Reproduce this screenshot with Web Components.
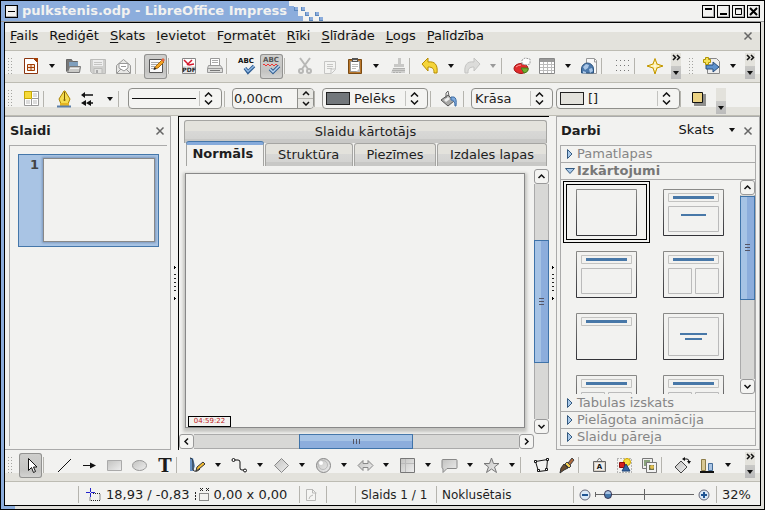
<!DOCTYPE html>
<html lang="lv">
<head>
<meta charset="utf-8">
<meta name="viewport" content="width=device-width, initial-scale=1">
<title>pulkstenis.odp - LibreOffice Impress</title>
<style>
    html, body {
        margin: 0;
        height: 100%;
    }
    body {
        font: 13px/16px "DejaVu Sans", sans-serif;
        color: #1e1e1e;
        background: #f2f2f0;
    }
</style>
</head>
<body>
<impress-app></impress-app>

<script>
// icons are drawn on a 20x20 grid
const ICONS = {
    new: `<path d="M3.5 2.5h9l4 4v11h-13z" fill="#fff" stroke="#8c3510"/><path d="M12 2h5v5z" fill="#a33e03"/><path d="M6.5 8.5h7v6h-7z" fill="#f6e2d4" stroke="#a33e03"/><path d="M7 11.5h6M10 9v5" stroke="#a33e03"/>`,
    open: `<path d="M3.5 15.5v-12h5l1 2h5v3" fill="#777" stroke="#666"/><path d="M6 6h9v5H6z" fill="#7f9fbd"/><path d="M6.5 10.5h11l-1 6h-12z" fill="#c9c9c6" stroke="#777"/><path d="M7 12.5h9" stroke="#eee"/>`,
    save: `<path d="M2.5 3.5h15v14h-13l-2-2z" fill="#d0d0ce" stroke="#bcbcba"/><path d="M5 4h10v6H5z" fill="#eee"/><path d="M6 6.5h8M6 8.5h8" stroke="#c4c4c2"/><path d="M6 12.5h8v5H6z" fill="#e2e2e0" stroke="#bcbcba"/><path d="M8 14h2v3H8z" fill="#aaa"/>`,
    mail: `<path d="M3.5 9.5l7-6 7 6v8h-14z" fill="#e8e8e6" stroke="#9a9a98"/><path d="M6 12V7.5h9V12l-4 3z" fill="#fff" stroke="#999"/><path d="M4 17l4-4M17 17l-4-4M8 10.5h5" stroke="#999" fill="none"/>`,
    edit: `<path d="M3.5 3.5h13v13h-13z" fill="#fafafa" stroke="#555"/><path d="M5 6.5h8M5 8.5h7M5 10.5h4M5 12.5h4" stroke="#aaa"/><path d="M8 13l2-3 6-6 2 2-6 6z" fill="#f5a623" stroke="#a86a10"/><path d="M15 4l2-2 2 2-2 2z" fill="#e2643f"/><path d="M7.5 14l1-3 2 2z" fill="#222"/>`,
    pdf: `<path d="M3.5 2.5h13v15h-13z" fill="#fff" stroke="#888"/><path d="M5 4l5 5 5-1M8 9l5-5" fill="none" stroke="#d3182b" stroke-width="1.5"/><path d="M4 10h12v7H4z" fill="#e6e6e6"/><text x="10" y="16" text-anchor="middle" font-size="6" font-weight="bold" fill="#222">PDF</text>`,
    print: `<path d="M6.5 9V2.5h9V9" fill="#fff" stroke="#999"/><path d="M8 4.5h6M8 6.5h6" stroke="#aaa"/><path d="M4.5 9.5h12l2 3v4h-15v-4z" fill="#dcdcda" stroke="#999"/><path d="M3.5 12.5h15" stroke="#999"/><path d="M6 14.5h10" stroke="#777"/>`,
    abc: `<text x="1" y="7" font-size="7" font-weight="bold" fill="#111">ABC</text><path d="M8 12l3 4 6-6" fill="none" stroke="#315f94" stroke-width="3.5"/><path d="M8 12l3 3.5 6-5.5" fill="none" stroke="#8fb8e4" stroke-width="1.5"/>`,
    autoabc: `<text x="1" y="6" font-size="7" font-weight="bold" fill="#555">ABC</text><path d="M1 9l1-1 2 2 2-2 2 2 2-2 2 2 2-2 2 2" fill="none" stroke="#e33"/><path d="M8 13l3 3 6-6" fill="none" stroke="#315f94" stroke-width="3.5"/><path d="M8 13l3 3 6-6" fill="none" stroke="#b8d3ef" stroke-width="1.5"/>`,
    cut: `<g fill="none" stroke="#b8b8b6" stroke-width="2"><path d="M5 2l8 11M15 2L7 13"/><circle cx="6" cy="15" r="2"/><circle cx="14" cy="15" r="2"/></g>`,
    copy: `<path d="M4.5 5.5h11v8l-4 4h-7z" fill="#f4f4f2" stroke="#c6c6c4"/><path d="M7 8.5h6M7 10.5h6M7 12.5h5" stroke="#c6c6c4"/><path d="M11 17v-4h4" fill="none" stroke="#c6c6c4"/>`,
    paste: `<path d="M3.5 3.5h13v14h-13z" fill="#b9772c" stroke="#7a4a12"/><path d="M5.5 5.5h9v10h-9z" fill="#fff" stroke="#999"/><path d="M7 8.5h6M7 10.5h6M7 12.5h4" stroke="#bbb"/><path d="M7 2h6v4H7z" fill="#555"/><path d="M8 4.5h4" stroke="#ddd"/><path d="M11 16l4-4v4z" fill="#bbb"/>`,
    brush: `<path d="M11 2h3v6h3v3H7V8h4z" fill="#c8c8c6"/><path d="M6 12h12v5H4z" fill="#cfcfcd"/><path d="M6 12.5h12M5 14.5h13M6 16.5h2m1 0h2m1 0h2" stroke="#b0b0ae"/>`,
    undo: `<path d="M2 8l6-6v4c7-1 10 3 9 11h-3c0-4-1-6-6-6v4z" fill="#f5d53a" stroke="#b68b00"/>`,
    redo: `<path d="M18 8l-6-6v4C5 5 2 9 3 17h3c0-4 1-6 6-6v4z" fill="#dcdcda" stroke="#c4c4c2"/>`,
    chart: `<ellipse cx="9" cy="12.5" rx="7" ry="5" fill="#e02b2b" stroke="#a01818"/><path d="M9 12h7q1 4-4 5z" fill="#6eae32" stroke="#477c18"/><path d="M4 11q2-2 5-2" fill="none" stroke="#f99"/><path d="M10 8V4l3-2 5 1v5l-4 1z" fill="#fff" stroke="#999" stroke-dasharray="2 1"/>`,
    table: `<path d="M2.5 2.5h15v15h-15z" fill="#fff" stroke="#888"/><path d="M3 3h14v3H3z" fill="#999"/><path d="M3 8.5h14M3 11.5h14M3 14.5h14M6.5 6v11M10.5 6v11M14.5 6v11" stroke="#bbb"/>`,
    globe: `<path d="M7.5 2.5h8l2 2v13h-10z" fill="#f8f8f8" stroke="#999"/><path d="M15.5 3v3h2" fill="none" stroke="#999"/><path d="M2.5 17V13a6 6 0 0 1 12 0v4z" fill="#4c79ac" stroke="#2d557f"/><path d="M4 11l3-3 3 1-1 3-3 2zM10 13l3-1 1 3-3 2zM4 15l3 1v1H4z" fill="#a9c6e6"/>`,
    grid: `<path d="M4 4.5h13M4 9.5h13M4 14.5h13" stroke="#777" stroke-dasharray="1 3"/>`,
    star4: `<path d="M10 2.5l2 5.5 6 2-6 2-2 6-2-6-6-2 6-2z" fill="#fae37a" stroke="#c29700"/><path d="M10 6v8M6 10h8" stroke="#fff"/>`,
    newslide: `<path d="M5.5 2.5h9l3 3v12h-12z" fill="#eee" stroke="#888"/><path d="M4 9h7V6l6 5-6 5v-3H4z" fill="#5d91cc" stroke="#294f7c"/><path d="M3.5 1.5h3v2h2v3h-2v2h-3v-2h-2v-3h2z" fill="#f7e35c" stroke="#b19400"/>`,
    quad: `<path d="M3.5 2.5h14v14h-14z" fill="#fff" stroke="#999"/><path d="M3.5 2.5h7v7h-7z" fill="#f5d93a" stroke="#c9a900"/><path d="M12 4h4v4h-4zM5 11h4v4H5zM12 11h4v4h-4z" fill="#ddd"/><path d="M10.5 10v7M11 9.5h6" stroke="#999"/>`,
    pen: `<path d="M10 2h1l5 8-2 5H7l-2-5z" fill="#f5dc50" stroke="#aa8200"/><path d="M10.5 3v7" stroke="#7a5c00"/><circle cx="10.5" cy="11" r="1" fill="#7a5c00"/><path d="M6 14h9v3H6z" fill="#e5b422"/><path d="M3 17.5h14" stroke="#5b7ea8" stroke-width="2"/>`,
    lineends: `<path d="M5 6h9M10 14h4" stroke="#111" stroke-width="1.5"/><path d="M2 6l4-3v6zM2 14l5-3v6zM7 14l5-3v6z" fill="#111"/>`,
    bucket: `<g transform="translate(-3 0)"><path d="M3 11l7-5 6 6-6 5z" fill="#a9a9a7" stroke="#555"/><path d="M8 9V4l2-2 1 5" fill="none" stroke="#666"/><path d="M13 8h3q3 1 2 9h-1q0-6-4-6z" fill="#7faadc" stroke="#3f6ea6"/><path d="M6 11l4-3 2 2-4 3z" fill="#eee"/></g>`,
    shadow: `<g transform="translate(-3 0)"><path d="M6 5h12v12H6z" fill="#8e8e8c"/><path d="M4.5 3.5h10v10h-10z" fill="#ecd384" stroke="#111"/></g>`,
    pointer: `<path d="M7.5 3.5v12l3-3 2 5 2-1-2-4.5h3.5z" fill="#fff" stroke="#111"/>`,
    line: `<path d="M4 17L17 4" stroke="#111"/>`,
    arrowline: `<path d="M4 10.5h9" stroke="#111"/><path d="M11 7.5l6 3-6 3z" fill="#111"/>`,
    rect: `<path d="M3.5 5.5h14v10h-14z" fill="url(#g)" stroke="#aaa"/>`,
    ellipse: `<ellipse cx="10.5" cy="10.5" rx="7" ry="5" fill="url(#g)" stroke="#999"/>`,
    texttool: `<text x="11" y="17" text-anchor="middle" font-family="DejaVu Serif, serif" font-weight="bold" font-size="18" fill="#1b1b1b">T</text>`,
    curve: `<path d="M3 3h3l2 8-2 5H3z" fill="#668fc0"/><path d="M3 3q3 0 3 5t0 7q3 3 7-1" fill="none" stroke="#222"/><path d="M9 16l1-4 6-5 2 2-6 5z" fill="#f2bc35" stroke="#333"/>`,
    connector: `<path d="M5 5h4q2 0 2 2v6q0 2 2 2h2" fill="none" stroke="#111"/><circle cx="4.5" cy="5" r="1.5" fill="#fff" stroke="#111"/><circle cx="16" cy="15.5" r="1.5" fill="#fff" stroke="#111"/>`,
    diamond: `<path d="M10.5 3.5l7 7-7 7-7-7z" fill="url(#g)" stroke="#888"/>`,
    sphere: `<circle cx="10.5" cy="10.5" r="7" fill="url(#g)" stroke="#888"/><circle cx="10" cy="10" r="4.5" fill="none" stroke="#bbb"/><circle cx="8" cy="8" r="2" fill="#fff"/>`,
    leftright: `<path d="M3 10.5l5-5v3h5v-3l5 5-5 5v-3H8v3z" fill="url(#g)" stroke="#888"/>`,
    flow: `<path d="M3.5 3.5h14v14h-14z" fill="url(#g)" stroke="#777"/><path d="M8.5 4v13M4 8.5h13" stroke="#bbb"/>`,
    callout: `<path d="M4 4.5h13q1 0 1 1v7q0 1-1 1h-9l-4 4v-4q-1 0-1-1v-7q0-1 1-1z" fill="url(#g)" stroke="#888"/>`,
    star5: `<path d="M10.5 3l2 5.5h5.5l-4.5 3.5 2 5.5-5-3.5-5 3.5 2-5.5L3 8.5h5.5z" fill="url(#g)" stroke="#777"/>`,
    points: `<path d="M4.5 6.5l12-2-1 11-8 1z" fill="none" stroke="#111"/><path d="M3.5 5.5h2v2h-2zM15.5 3.5h2v2h-2zM6.5 14.5h2v2h-2zM14.5 13.5h2v2h-2z" fill="#fff" stroke="#111"/>`,
    glue: `<path d="M12 8l4-5 2 2-4 5z" fill="#b06838" stroke="#444"/><path d="M9 9l2-2 4 4-2 2z" fill="#f3cf54" stroke="#444"/><path d="M8 9l4 4-4 2-4 3 1-5z" fill="#6c4d30" stroke="#333"/>`,
    fontwork: `<path d="M8 6l2.5-3L13 6" fill="none" stroke="#777"/><path d="M4.5 6.5h12v10h-12z" fill="#d6cfc4" stroke="#666"/><path d="M6 8h9v7H6z" fill="#eee"/><text x="10.5" y="14" text-anchor="middle" font-size="7" font-weight="bold" fill="#111">A</text>`,
    image: `<path d="M3.5 3.5h14v14h-14z" fill="none" stroke="#777" stroke-dasharray="1 2"/><circle cx="13" cy="7" r="3.5" fill="#f7df43" stroke="#d0a800"/><path d="M5.5 7.5h5v5h-5z" fill="#d32020" stroke="#8d0a0a"/><path d="M12 9l4 7H8z" fill="#3465a4" stroke="#1d4273"/>`,
    gallery: `<path d="M3.5 3.5h10v10h-10z" fill="#eee" stroke="#777"/><path d="M5 5h6v6H5z" fill="#8aa37c"/><path d="M7.5 7.5h10v10h-10z" fill="#f3f3f3" stroke="#777"/><path d="M10 10h5v5h-5z" fill="#6f7450"/><circle cx="13" cy="12" r="2" fill="#e3bf50"/>`,
    rotate: `<path d="M3 12l6-6 6 6-6 6z" fill="url(#g)" stroke="#444"/><path d="M12 4h3q2 0 2 3" fill="none" stroke="#111"/><path d="M15 6h4l-2 3zM13 2v4l-3-2z" fill="#111"/>`,
    align: `<path d="M4.5 4.5h4v11h-4z" fill="#d8c894" stroke="#8d7d48"/><path d="M11.5 8.5h4v7h-4z" fill="#a9c4e4" stroke="#456d98"/><path d="M3 17h14" stroke="#111" stroke-width="2"/>`,
    position: `<path d="M2 7.5h9M6.5 3v9" stroke="#22c" stroke-dasharray="4 1"/><path d="M9 8.5h7v7H6v-3" fill="none" stroke="#222" stroke-dasharray="1 1"/>`,
    size: `<path d="M3.5 7v9" stroke="#222" stroke-dasharray="2 1"/><path d="M7.5 8.5h9v7h-9z" fill="none" stroke="#222" stroke-dasharray="1 1"/><path d="M8 3l3 3M8 6l3-3M14 3l3 3M14 6l3-3" stroke="#222"/>`,
    doc: `<path d="M5.5 4.5h6l3 3v8h-9z" fill="#f5f5f3" stroke="#b9b9b7"/><path d="M11.5 4v4h4M8 14q0-3 4-4" stroke="#b9b9b7" fill="none"/>`,
    minus: `<circle cx="10" cy="10" r="5" fill="#dce9f7" stroke="#667"/><path d="M7 10h6" stroke="#205493" stroke-width="2"/>`,
    plus: `<circle cx="10" cy="10" r="5" fill="#dce9f7" stroke="#667"/><path d="M7 10h6M10 7v6" stroke="#205493" stroke-width="2"/>`,
    close: `<path d="M6.5 6.5l7 7M13.5 6.5l-7 7" stroke="#666" stroke-width="1.5"/>`
};

function icon(name) {
    return `<svg width="20" height="20" viewBox="0 0 20 20" aria-hidden="true">
        <defs><linearGradient id="g" x1="0" y1="0" x2="1" y2="1"><stop offset="0" stop-color="#c2c2c0"/><stop offset="1" stop-color="#eee"/></linearGradient></defs>
        ${ICONS[name]}</svg>`;
}

const DOWN = `<svg width="6" height="4" viewBox="0 0 6 4" aria-hidden="true"><path d="M0 0h6L3 4z" fill="currentColor"/></svg>`;

const RESET = `
    button {
        font: inherit;
        color: inherit;
        padding: 0;
        margin: 0;
        border: 0;
        background: none;
        display: flex;
        align-items: center;
        justify-content: center;
    }
    svg { display: block; flex: none; }
`;

class BaseElement extends HTMLElement {
    constructor() {
        super();
        this.shadowDOM = this.attachShadow({mode: "open"});
    }

    connectedCallback() {
        this.shadowDOM.innerHTML = `<style>* { box-sizing: border-box; } ${RESET} ${this.styles}</style>${this.markup}`;
    }

    attr(name) {
        return this.getAttribute(name) || "";
    }
}

class ToolButton extends BaseElement {
    get styles() {
        return `
            :host { display: flex; flex: none; }
            .main { width: 25px; height: 25px; border-radius: 3px; }
            :host([active]) .main {
                background: linear-gradient(#cfcfcd, #c4c4c2 70%, #d6d6d4);
                box-shadow: inset 0 0 0 1px #929290;
                width: 23px;
                margin: 0 1px;
            }
            .menu { width: 17px; color: #111; }
            .menu.off { color: #999; }
        `;
    }
    get markup() {
        const label = this.attr("label");
        const menu = this.hasAttribute("menu")
            ? `<button class="menu ${this.attr("menu")}" aria-label="${label}: izvēlne">${DOWN}</button>` : "";
        return `<button class="main" aria-label="${label}">${icon(this.attr("icon"))}</button>${menu}`;
    }
}
customElements.define("tool-button", ToolButton);

class ToolSeparator extends BaseElement {
    get styles() {
        return `:host { display: block; flex: none; width: 8px; height: 16px; border-left: 1px solid #b5b4ae; box-sizing: border-box; }`;
    }
    get markup() { return ""; }
}
customElements.define("tool-separator", ToolSeparator);

class ToolHandle extends BaseElement {
    get styles() {
        return `
            :host { display: block; flex: none; width: 5px; height: 17px; margin: 0 5px 0 3px; }
            svg path { stroke: #a4a4a0; stroke-dasharray: 1 2; }
        `;
    }
    get markup() {
        return `<svg width="5" height="17" viewBox="0 0 5 17"><path d="M.5 0v17M3.5 0v17"/></svg>`;
    }
}
customElements.define("tool-handle", ToolHandle);

class ToolMore extends BaseElement {
    get styles() {
        return `
            :host { display: flex; flex: none; }
            button {
                width: 10px;
                height: 26px;
                flex-direction: column;
                justify-content: space-between;
                padding: 1px 0 4px;
                background: linear-gradient(#e3e2dc 50%, #c9c9c7 50%, #bbb);
                color: #111;
            }
            :host([plain]) { align-self: flex-end; }
            :host([plain]) .chev { visibility: hidden; }
        `;
    }
    get markup() {
        return `<button aria-label="Vairāk"><svg class="chev" width="9" height="7" viewBox="0 0 9 7"><path d="M1 1l2.5 2.5L1 6M5 1l2.5 2.5L5 6" fill="none" stroke="#111" stroke-width="1.5"/></svg>${DOWN}</button>`;
    }
}
customElements.define("tool-more", ToolMore);

class ToolBar extends BaseElement {
    get styles() {
        return `
            :host {
                display: flex;
                align-items: center;
                flex: none;
                height: 32px;
                box-sizing: border-box;
                padding-bottom: 1px;
                border-bottom: 1px solid #bdbcb3;
                background: linear-gradient(#f2f2f0 74%, #e3e2dc 74%);
            }
            :host([tall]) { height: 33px; }
        `;
    }
    get markup() {
        return `<slot></slot>`;
    }
}
customElements.define("tool-bar", ToolBar);

class ComboField extends BaseElement {
    get styles() {
        return `
            :host {
                display: flex;
                align-items: center;
                flex: none;
                height: 21px;
                box-sizing: border-box;
                border: 1px solid #8f8f8b;
                border-radius: 4px;
                background: #f4f4f2;
                padding: 0 8px 0 3px;
            }
            .swatch { width: 24px; height: 13px; border: 1px solid #222; flex: none; margin-right: 4px; }
            .stroke { flex: none; width: 64px; height: 1px; background: #111; }
            select {
                appearance: none;
                font: inherit;
                color: #1e1e1e;
                border: 0;
                background: none;
                padding: 0;
                margin: 0;
                flex: 1;
                min-width: 0;
                height: 18px;
            }
            .steps { border-left: 1px solid #c3c3c0; padding: 1px 0 1px 4px; }
        `;
    }
    get markup() {
        const color = this.attr("swatch");
        return `
            ${color ? `<span class="swatch" style="background:${color}"></span>` : ""}
            ${this.hasAttribute("stroke") ? `<span class="stroke"></span>` : ""}
            <select aria-label="${this.attr("label")}"><option>${this.attr("value")}</option></select>
            <span class="steps"><svg width="9" height="13" viewBox="0 0 9 13"><path d="M1 4.5L4.5 1 8 4.5M1 8.5L4.5 12 8 8.5" fill="none" stroke="#111" stroke-width="1.5"/></svg></span>
        `;
    }
}
customElements.define("combo-field", ComboField);

class SpinField extends BaseElement {
    get styles() {
        return `
            :host {
                display: flex;
                flex: none;
                height: 21px;
                box-sizing: border-box;
                border: 1px solid #8f8f8b;
                border-radius: 4px;
                background: #f4f4f2;
                overflow: hidden;
            }
            input { font: inherit; color: #1e1e1e; border: 0; background: none; padding: 0 0 0 1px; flex: 1; min-width: 0; }
            .steps { display: flex; flex-direction: column; border-left: 1px solid #8f8f8b; width: 16px; background: #e8e8e4; }
            button { flex: 1; }
            button + button { border-top: 1px solid #b5b4ae; }
        `;
    }
    get markup() {
        return `
            <input type="text" aria-label="${this.attr("label")}" value="${this.attr("value")}">
            <span class="steps">
                <button aria-label="Palielināt"><svg width="8" height="5" viewBox="0 0 8 5"><path d="M1 4l3-3 3 3" fill="none" stroke="#111" stroke-width="1.5"/></svg></button>
                <button aria-label="Samazināt"><svg width="8" height="5" viewBox="0 0 8 5"><path d="M1 1l3 3 3-3" fill="none" stroke="#111" stroke-width="1.5"/></svg></button>
            </span>
        `;
    }
}
customElements.define("spin-field", SpinField);

class TitleBar extends BaseElement {
    get styles() {
        return `
            :host {
                display: flex;
                align-items: stretch;
                flex: none;
                height: 21px;
                box-sizing: border-box;
                background: #f2f2f0;
                border-bottom: 1px solid #999;
            }
            .caption { display: flex; align-items: center; background: #8caddc; color: #f2f2f0; gap: 4px; padding-left: 4px; }
            h1 { font: bold 13px/18px "DejaVu Sans", sans-serif; margin: 0; white-space: nowrap; }
            .space { flex: 1; }
            .controls { display: flex; align-items: center; gap: 2px; padding-right: 4px; }
            button { width: 13px; height: 13px; border: 1px solid #000; background: #f2f2f0; color: #000; box-shadow: inset -1px -1px #aaa; }
        `;
    }
    get markup() {
        const box = (label, path, weight = 2) => `<button aria-label="${label}"><svg width="11" height="11" viewBox="0 0 11 11"><path d="${path}" fill="none" stroke="#000" stroke-width="${weight}"/></svg></button>`;
        return `
            <div class="caption">${box("Logs", "M2 5.5h7", 1)}<h1><slot></slot></h1></div>
            <svg width="42" height="20" viewBox="0 0 42 20" shape-rendering="crispEdges">
                <path d="M0 0h2v5h5v5h4v5h5v5H0z" fill="#8caddc"/>
                <path d="M7 6h4v4H7zM14 6h4v4h-4zM18 11h4v4h-4zM28 11h4v4h-4zM22 16h4v4h-4zM32 16h4v4h-4z" fill="#5b87bd"/>
                <path d="M8 6h3v3H8zM15 6h3v3h-3zM19 11h3v3h-3zM29 11h3v3h-3zM23 16h3v3h-3zM33 16h3v3h-3z" fill="#8caddc"/>
            </svg>
            <span class="space"></span>
            <div class="controls">
                ${box("Ēnot", "M2 3h7")}${box("Minimizēt", "M2 8h7")}${box("Maksimizēt", "M2.5 2.5h6v6h-6zM2 3h7", 1)}${box("Aizvērt", "M2 2l7 7M9 2l-7 7")}
            </div>
        `;
    }
}
customElements.define("title-bar", TitleBar);

class MenuBar extends BaseElement {
    get styles() {
        return `
            :host {
                display: flex;
                align-items: center;
                flex: none;
                height: 28px;
                box-sizing: border-box;
                padding: 0 2px 1px 5px;
                border-bottom: 1px solid #bdbcb3;
                background: linear-gradient(#f2f2f0 33%, #e3e2dc 33%);
            }
            nav { display: flex; gap: 11px; flex: 1; }
            nav button { color: #111; white-space: pre; }
            u { text-decoration-thickness: 1px; text-underline-offset: 2px; text-decoration-skip-ink: none; }
        `;
    }
    get markup() {
        const items = ["_Fails", "R_ediģēt", "_Skats", "_Ievietot", "F_ormatēt", "_Rīki", "_Slīdrāde", "_Logs", "_Palīdzība"];
        const html = items.map(t => `<button><span>${t.replace(/_(.)/, "<u>$1</u>")}</span></button>`).join("");
        return `<nav>${html}</nav><button aria-label="Aizvērt dokumentu">${icon("close")}</button>`;
    }
}
customElements.define("menu-bar", MenuBar);

class ScrollStrip extends BaseElement {
    get styles() {
        return `
            :host { display: flex; flex-direction: column; flex: none; width: 15px; }
            button { flex: none; width: 15px; height: 15px; border: 1px solid #999; border-radius: 3px; background: #f4f4f2; }
            .gap { background: #d8d8d6; border: 0 solid #aaa; border-width: 0 1px; }
            .thumb {
                display: flex;
                align-items: center;
                justify-content: center;
                border: 1px solid #3f73a9;
                background: linear-gradient(90deg, #a6c3e5 45%, #8caddc 45%);
            }
            :host([across]) { flex-direction: row; width: auto; height: 15px; }
            :host([across]) .gap { border-width: 1px 0; }
            :host([across]) .thumb { background: linear-gradient(#a6c3e5 45%, #8caddc 45%); }
            :host([across]) .grip { transform: rotate(90deg); }
        `;
    }
    get markup() {
        const [before, size, after] = this.attr("track").split(" ");
        const across = this.hasAttribute("across");
        const arrow = d => `<svg width="9" height="9" viewBox="0 0 9 9"><path d="${d}" fill="none" stroke="#111" stroke-width="1.5"/></svg>`;
        return `
            <button aria-label="Atpakaļ">${arrow(across ? "M6 1.5l-3 3 3 3" : "M1.5 6l3-3 3 3")}</button>
            <span class="gap" style="flex:${before}"></span>
            <span class="thumb" style="flex:${size}"><svg class="grip" width="5" height="7" viewBox="0 0 5 7"><path d="M0 .5h5M0 3.5h5M0 6.5h5" stroke="#556"/></svg></span>
            <span class="gap" style="flex:${after}"></span>
            <button aria-label="Uz priekšu">${arrow(across ? "M3 1.5l3 3-3 3" : "M1.5 3l3 3 3-3")}</button>
        `;
    }
}
customElements.define("scroll-strip", ScrollStrip);

class PaneSplitter extends BaseElement {
    get styles() {
        return `
            :host { display: flex; align-items: center; justify-content: center; flex: none; width: 7px; }
        `;
    }
    get markup() {
        return `<svg width="3" height="36" viewBox="0 0 3 36" shape-rendering="crispEdges"><path d="M1 1h1v3H1zM2 2h1v1H2zM1 32h1v3H1zM2 33h1v1H2z" fill="#000"/><path d="M1 9h2M1 13h2M1 17h2M1 21h2M1 25h2" stroke="#222"/></svg>`;
    }
}
customElements.define("pane-splitter", PaneSplitter);

class PanelHeader extends BaseElement {
    get styles() {
        return `
            :host { display: flex; align-items: center; flex: none; height: 28px; box-sizing: border-box; }
            h2 { font: bold 13px/16px "DejaVu Sans", sans-serif; margin: 0; flex: 1; }
        `;
    }
    get markup() {
        return `<h2>${this.attr("heading")}</h2><slot></slot><button aria-label="Aizvērt">${icon("close")}</button>`;
    }
}
customElements.define("panel-header", PanelHeader);

class SlidePanel extends BaseElement {
    get styles() {
        return `
            :host { display: flex; flex-direction: column; flex: none; width: 166px; box-sizing: border-box; padding-left: 4px; border: solid #aaa; border-width: 1px 1px 1px 0; }
            panel-header { padding-left: 1px; }
            .list { flex: 1; border: solid #aaa; border-width: 1px 0 0 1px; margin: 0 3px 3px 0; padding: 8px; }
            .slide { width: 100%; height: 93px; background: #a9c4e4; border: 1px solid #4577aa; padding: 3px; align-items: stretch; color: #444; font-weight: bold; line-height: 13px; }
            .number { width: 21px; padding-right: 4px; text-align: right; }
            .page { flex: 1; margin-bottom: 1px; background: #f2f2f0; border: 1px solid #888; box-shadow: 0 0 2px 1px #7d99bd; }
        `;
    }
    get markup() {
        return `
            <panel-header heading="Slaidi"></panel-header>
            <div class="list">
                <button class="slide"><span class="number">1</span><span class="page"></span></button>
            </div>
        `;
    }
}
customElements.define("slide-panel", SlidePanel);

class EditArea extends BaseElement {
    get styles() {
        return `
            :host { display: flex; flex-direction: column; flex: 1; min-width: 0; border: solid #000; border-width: 1px 0 0 1px; padding-bottom: 1px; box-sizing: border-box; }
            .tabs { padding: 3px 2px 3px 5px; }
            .tabs button {
                height: 23px;
                border: 1px solid #a5a5a2;
                border-bottom: 0;
                border-radius: 3px 3px 0 0;
                background: linear-gradient(#e3e2dc 45%, #d8d8d6 45%, #d4d4d2 80%, #c8c8c6 80%);
                color: #1e1e1e;
            }
            .wide { width: 100%; }
            .row { display: flex; gap: 1px; padding-left: 2px; align-items: flex-end; }
            .row button { flex: 88; }
            .row .notes { flex: 82; }
            .row .handout { flex: 110; }
            .row .current { flex: 73; height: 24px; margin-top: -1px; font-weight: bold; background: #f2f2f0; border-top: 3px solid #85aadb; box-shadow: 0 -1px #4577aa; padding: 0 4px 3px 0; }
            .work { display: flex; flex: 1; min-height: 0; }
            .stage { flex: 1; display: flex; flex-direction: column; min-width: 0; }
            .desk { flex: 1; display: flex; padding: 4px 9px 6px 6px; }
            .page { flex: 1; border: 1px solid #888; box-shadow: 0 2px 3px 2px #c4c4c0; position: relative; background: #f2f2f0; }
            .clock { position: absolute; left: 2px; bottom: 0; width: 43px; border: 1px solid #000; color: #c01818; font-size: 7px; line-height: 9px; text-align: center; background: #f2f2f0; }
            .side { margin-bottom: 15px; }
        `;
    }
    get markup() {
        return `
            <div class="tabs">
                <button class="wide">Slaidu kārtotājs</button>
                <div class="row">
                    <button class="current">Normāls</button>
                    <button>Struktūra</button>
                    <button class="notes">Piezīmes</button>
                    <button class="handout">Izdales lapas</button>
                </div>
            </div>
            <div class="work">
                <div class="stage">
                    <div class="desk"><div class="page"><div class="clock">04:59:22</div></div></div>
                    <scroll-strip across track="106 114 107"></scroll-strip>
                </div>
                <scroll-strip class="side" track="57 123 57"></scroll-strip>
            </div>
        `;
    }
}
customElements.define("edit-area", EditArea);

class LayoutOption extends BaseElement {
    get styles() {
        return `
            :host { display: block; height: 62px; }
            button { width: 100%; height: 100%; }
            :host([selected]) button { border: 4px double #000; }
            :host([selected]) svg { margin: -4px; }
        `;
    }
    get markup() {
        const parts = {
            title: `<path d="M5.5 4.5h50v8h-50z" fill="none" stroke="#c3c3c1"/><path d="M10 8.5h41" stroke="#4878a8" stroke-width="3"/>`,
            body: `<path d="M5.5 17.5h50v25h-50z" fill="none" stroke="#bbb"/>`,
            mark: `<path d="M18 26h25" stroke="#4878a8" stroke-width="2"/>`,
            columns: `<path d="M5.5 17.5h23v25h-23zM32.5 17.5h23v25h-23z" fill="none" stroke="#bbb"/>`,
            centered: `<path d="M5.5 4.5h50v38h-50z" fill="none" stroke="#bbb"/><path d="M17 21h27M22 26h17" stroke="#4878a8" stroke-width="2"/>`
        };
        const drawn = this.attr("parts").split(" ").map(p => parts[p] || "").join("");
        return `
            <button aria-label="${this.attr("label")}">
                <svg width="61" height="47" viewBox="0 0 61 47">
                    <defs><linearGradient id="edge" x2="0" y2="1"><stop offset="0" stop-color="#8a8a88"/><stop offset="1" stop-color="#333338"/></linearGradient></defs>
                    <path d="M.5.5h60v46H.5z" fill="none" stroke="url(#edge)"/>${drawn}
                </svg>
            </button>
        `;
    }
}
customElements.define("layout-option", LayoutOption);

class TaskSection extends BaseElement {
    get styles() {
        return `
            :host { display: flex; flex-direction: column; flex: none; }
            button { width: 100%; height: 17px; border-top: 1px solid #aaa; justify-content: flex-start; gap: 2px; padding-left: 4px; color: #858585; }
            :host([after]) button { border-top-color: transparent; }
            :host([open]) { flex: 1; min-height: 0; }
            :host([open]) button { font-weight: bold; color: #777; border-bottom: 1px solid #aaa; height: 18px; flex: none; }
        `;
    }
    get markup() {
        const shape = this.hasAttribute("open") ? "M.5 2.5h9L5 7.5z" : "M2.5 .5v9L7 5z";
        return `
            <button><svg width="10" height="10" viewBox="0 0 10 10"><path d="${shape}" fill="#a9c9ea" stroke="#345a80"/></svg>${this.attr("heading")}</button>
            <slot></slot>
        `;
    }
}
customElements.define("task-section", TaskSection);

class TaskPanel extends BaseElement {
    get styles() {
        return `
            :host { display: flex; flex-direction: column; flex: none; width: 204px; box-sizing: border-box; border: 1px solid #aaa; padding: 0 1px 3px 3px; }
            .view { gap: 15px; margin: 0 3px 2px 0; color: #111; }
            panel-header { padding-left: 1px; }
            .sections { flex: 1; min-height: 0; display: flex; flex-direction: column; border: 1px solid #aaa; border-top: 0; margin-right: 2px; }
            .layouts { display: flex; flex: 1; min-height: 0; }
            .grid { flex: 1; display: grid; grid-template-columns: 1fr 1fr; grid-auto-rows: 62px; padding: 1px 3px 0 2px; overflow: hidden; }
        `;
    }
    get markup() {
        return `
            <panel-header heading="Darbi"><button class="view">Skats ${DOWN}</button></panel-header>
            <div class="sections">
                <task-section heading="Pamatlapas"></task-section>
                <task-section heading="Izkārtojumi" open>
                    <div class="layouts">
                        <div class="grid">
                            <layout-option selected label="Tukšs slaids"></layout-option>
                            <layout-option parts="title body mark" label="Titulslaids"></layout-option>
                            <layout-option parts="title body" label="Virsraksts, saturs"></layout-option>
                            <layout-option parts="title columns" label="Virsraksts un 2 satura bloki"></layout-option>
                            <layout-option parts="title" label="Tikai virsraksts"></layout-option>
                            <layout-option parts="centered" label="Centrēts teksts"></layout-option>
                            <layout-option parts="title columns" label="Virsraksts, 2 satura bloki un saturs"></layout-option>
                            <layout-option parts="title columns" label="Virsraksts, saturs un 2 satura bloki"></layout-option>
                        </div>
                        <scroll-strip track="1 104 81"></scroll-strip>
                    </div>
                </task-section>
                <task-section heading="Tabulas izskats" after></task-section>
                <task-section heading="Pielāgota animācija"></task-section>
                <task-section heading="Slaidu pāreja"></task-section>
            </div>
        `;
    }
}
customElements.define("task-panel", TaskPanel);

class StatusBar extends BaseElement {
    get styles() {
        return `
            :host { display: flex; align-items: stretch; flex: none; height: 23px; box-sizing: border-box; padding: 4px 0 2px; background: #f2f2f0; white-space: nowrap; }
            .cell { display: flex; align-items: center; flex: none; box-sizing: border-box; border-left: 1px solid #b5b4ae; padding-left: 5px; }
            .empty { width: 73px; border: 0; }
            .place { width: 221px; gap: 2px; }
            .state { width: 27px; padding-left: 1px; }
            .blank { width: 29px; }
            .count { width: 81px; font-size: 12px; }
            .style { flex: 1; font-size: 12px; }
            .zoom { width: 143px; padding: 0 2px 0 1px; }
            .percent { width: 44px; }
            input {
                appearance: none;
                flex: 1;
                min-width: 0;
                margin: 0;
                height: 15px;
                background:
                    linear-gradient(#666, #666) 50% 50% / 1px 11px no-repeat,
                    linear-gradient(#666, #666) 0 50% / 1px 5px no-repeat,
                    linear-gradient(#666, #666) 0 50% / 100% 1px no-repeat;
            }
            input::-webkit-slider-thumb { appearance: none; width: 8px; height: 9px; border: 1px solid #335; border-radius: 4px; background: linear-gradient(#a9c4e4 40%, #4577aa 40%); }
        `;
    }
    get markup() {
        return `
            <span class="cell empty"></span>
            <span class="cell place">${icon("position")}<span>18,93 / -0,83</span>${icon("size")}<span>0,00 x 0,00</span></span>
            <span class="cell state">${icon("doc")}</span>
            <span class="cell blank"></span>
            <span class="cell count">Slaids 1 / 1</span>
            <span class="cell style">Noklusētais</span>
            <span class="cell zoom">
                <button aria-label="Tālināt">${icon("minus")}</button>
                <input type="range" aria-label="Mērogs" min="0" max="100" value="10">
                <button aria-label="Tuvināt">${icon("plus")}</button>
            </span>
            <span class="cell percent">32%</span>
        `;
    }
}
customElements.define("status-bar", StatusBar);

class ImpressApp extends BaseElement {
    get styles() {
        return `
            :host {
                display: flex;
                flex-direction: column;
                height: 100vh;
                min-height: 480px;
                box-sizing: border-box;
                background: linear-gradient(90deg, #8caddc 14px, #e0dfda 14px);
                border: 1px solid #000;
                overflow: hidden;
            }
            .client { flex: 1; min-height: 0; display: flex; flex-direction: column; margin: 0 3px 3px; border: 1px solid #000; background: #f2f2f0; }
            .main { flex: 1; min-height: 0; display: flex; }
            .push { flex: 1; }
            .pair { margin-left: 2px; }
            .near { margin-left: 3px; }
            .more { margin-right: 5px; }
            .last { margin-left: 4px; }
        `;
    }
    get markup() {
        const sep = `<tool-separator></tool-separator>`;
        const tools = list => list.split(" ").map(entry => {
            if (entry === "|") return sep;
            const [name, ...flags] = entry.split(":");
            const menu = flags.includes("off") ? `menu="off"` : flags.includes("menu") ? "menu" : "";
            return `<tool-button icon="${name}" label="${name}" ${menu} ${flags.includes("on") ? "active" : ""}></tool-button>`;
        }).join("");
        return `
            <title-bar>pulkstenis.odp - LibreOffice Impress</title-bar>
            <div class="client">
                <menu-bar></menu-bar>
                <tool-bar>
                    <tool-handle></tool-handle>
                    ${tools("new:menu open save mail | edit:on | pdf print | abc autoabc:on | cut copy paste:menu brush | undo:menu redo:off | chart table:menu globe | grid | star4")}
                    <span class="push"></span>
                    <tool-more class="more"></tool-more>
                    <tool-handle></tool-handle>
                    ${tools("newslide:menu")}
                    <tool-more class="more last"></tool-more>
                </tool-bar>
                <tool-bar tall>
                    <tool-handle></tool-handle>
                    ${tools("quad | pen lineends:menu |")}
                    <combo-field class="pair" style="width:94px" stroke label="Līnijas stils" value=""></combo-field>
                    <tool-separator class="pair"></tool-separator>
                    <spin-field style="width:82px" label="Līnijas platums" value="0,00cm"></spin-field>
                    <tool-separator></tool-separator>
                    <combo-field style="width:106px" swatch="#72777b" label="Līnijas krāsa" value="Pelēks"></combo-field>
                    <tool-separator class="pair"></tool-separator>
                    ${tools("bucket |")}
                    <combo-field style="width:82px" label="Aizpildījums" value="Krāsa"></combo-field>
                    <combo-field class="near" style="width:124px" swatch="#e3e2dc" label="Aizpildījuma krāsa" value="[]"></combo-field>
                    <tool-separator></tool-separator>
                    ${tools("shadow")}
                    <tool-more plain class="near"></tool-more>
                </tool-bar>
                <div class="main">
                    <slide-panel></slide-panel>
                    <pane-splitter></pane-splitter>
                    <edit-area></edit-area>
                    <pane-splitter></pane-splitter>
                    <task-panel></task-panel>
                </div>
                <tool-bar>
                    <tool-handle></tool-handle>
                    ${tools("pointer:on | line arrowline rect ellipse texttool | curve:menu connector:menu diamond:menu sphere:menu leftright:menu flow:menu callout:menu star5:menu | points glue | fontwork image gallery | rotate align:menu")}
                    <span class="push"></span>
                    <tool-more class="more"></tool-more>
                </tool-bar>
                <status-bar></status-bar>
            </div>
        `;
    }
}
customElements.define("impress-app", ImpressApp);
</script>
</body>
</html>
